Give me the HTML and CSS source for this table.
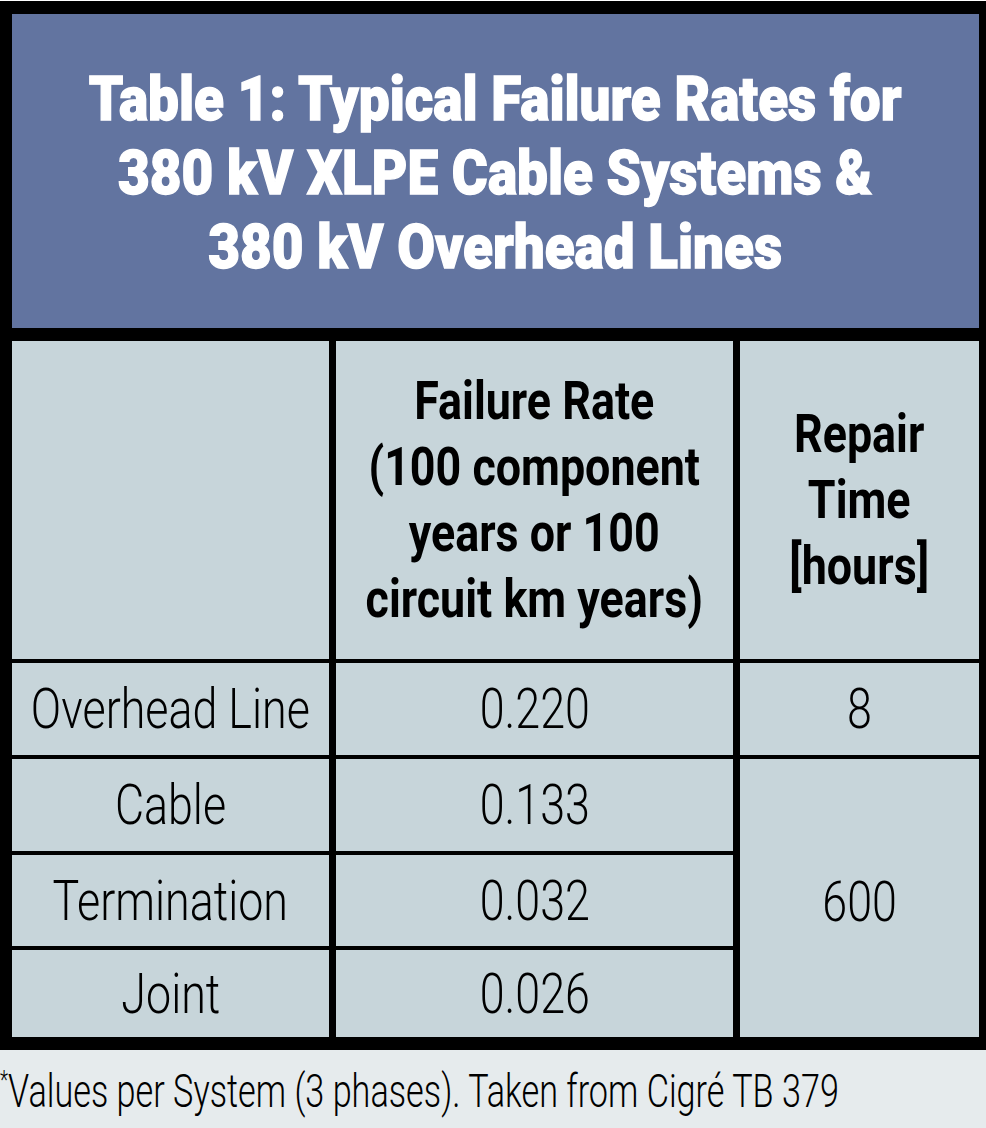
FILE: index.html
```html
<!DOCTYPE html>
<html lang="en">
<head>
<meta charset="utf-8">
<title>Table 1: Typical Failure Rates</title>
<link rel="stylesheet" href="styles.css">
</head>
<body>
<div class="frame">
  <div class="title"><span class="t t-title">Table 1: Typical Failure Rates for<br>380 kV XLPE Cable Systems &amp;<br>380 kV Overhead Lines</span></div>
  <div class="grid">
    <div class="cell head"></div>
    <div class="cell head"><span class="t t-head">Failure Rate<br>(100 component<br>years or 100<br>circuit km years)</span></div>
    <div class="cell head"><span class="t t-head">Repair<br>Time<br>[hours]</span></div>
    <div class="cell"><span class="t t-body">Overhead Line</span></div>
    <div class="cell"><span class="t t-body">0.220</span></div>
    <div class="cell"><span class="t t-body">8</span></div>
    <div class="cell"><span class="t t-body">Cable</span></div>
    <div class="cell"><span class="t t-body">0.133</span></div>
    <div class="cell span3"><span class="t t-body t-low">600</span></div>
    <div class="cell"><span class="t t-body">Termination</span></div>
    <div class="cell"><span class="t t-body">0.032</span></div>
    <div class="cell"><span class="t t-body">Joint</span></div>
    <div class="cell"><span class="t t-body">0.026</span></div>
  </div>
</div>
<div class="note"><span class="t t-note"><sup class="ast">*</sup>Values per System (3 phases). Taken from Cigré TB 379</span></div>
</body>
</html>
```

FILE: styles.css
```css
html, body {
  margin: 0;
  padding: 0;
  background: #ffffff;
}
body {
  width: 986px;
  padding-top: 1px;
  font-family: Roboto, "Liberation Sans", sans-serif;
  color: #000;
}
.frame {
  background: #000;
  padding: 13px 7px 13px 12px;
}
.t {
  display: inline-block;
  white-space: nowrap;
  text-align: center;
}
.title {
  height: 314px;
  background: #6274a0;
  color: #fff;
  display: flex;
  align-items: center;
  justify-content: center;
  margin-bottom: 13px;
}
.t-title {
  font-weight: 900;
  font-size: 62px;
  line-height: 74px;
  transform: scaleX(0.885);
  -webkit-text-stroke: 1.4px #fff;
  padding-top: 4px;
}
.grid {
  display: grid;
  grid-template-columns: 317px 397px 239px;
  grid-template-rows: 318px 92px 92px 91px 87px;
  column-gap: 7px;
  row-gap: 4px;
}
.cell {
  background: #c7d5da;
  display: flex;
  align-items: center;
  justify-content: center;
  overflow: visible;
}
.t-head {
  font-weight: 700;
  font-size: 54px;
  line-height: 66px;
  transform: scaleX(0.83);
}
.t-body {
  font-weight: 300;
  font-size: 56px;
  line-height: 66px;
  transform: scaleX(0.8);
}
.t-low {
  padding-top: 8px;
}
.span3 {
  grid-row: span 3;
}
.note {
  height: 78px;
  background: #e6ebed;
  display: flex;
  align-items: center;
  padding-top: 4px;
  box-sizing: border-box;
}
.t-note {
  font-weight: 300;
  font-size: 47px;
  line-height: 56px;
  text-align: left;
  transform: scaleX(0.728);
  transform-origin: left center;
}
.ast {
  font-size: 26px;
  vertical-align: 18px;
  line-height: 0;
}
```
